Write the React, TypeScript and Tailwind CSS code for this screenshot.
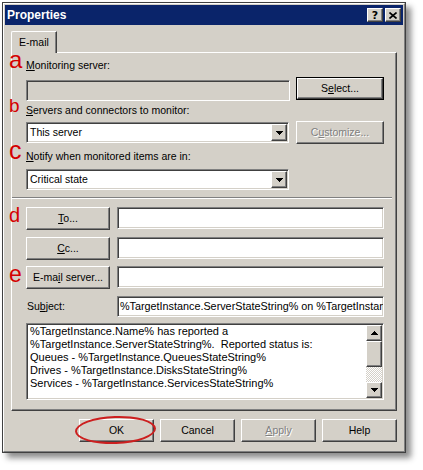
import React from "react";

const sunken =
  "border border-t-[#808080] border-l-[#808080] border-b-white border-r-white shadow-[inset_1px_1px_0_#404040,inset_-1px_-1px_0_#d4d0c8]";
const raised =
  "border border-t-white border-l-white border-b-[#404040] border-r-[#404040] shadow-[inset_-1px_-1px_0_#808080]";

function Tri({ up = false }: { up?: boolean }) {
  return (
    <svg width="7" height="4" viewBox="0 0 7 4" shapeRendering="crispEdges">
      {up ? <path d="M3.5 0L7 4H0z" fill="#000" /> : <path d="M0 0h7L3.5 4z" fill="#000" />}
    </svg>
  );
}

function Btn({
  children,
  className = "",
  disabled = false,
}: {
  children: React.ReactNode;
  className?: string;
  disabled?: boolean;
}) {
  return (
    <div
      className={`${raised} bg-[#d4d0c8] flex items-center justify-center ${
        disabled ? "text-[#808080] [text-shadow:1px_1px_0_#fff]" : "text-black"
      } ${className}`}
    >
      {children}
    </div>
  );
}

function Combo({ text }: { text: string }) {
  return (
    <div className={`${sunken} bg-white h-[21px] w-[263px] flex items-center`}>
      <span className="pl-[3px] flex-1">{text}</span>
      <div className={`${raised} w-[16px] h-[17px] mr-[1px] bg-[#d4d0c8] flex items-center justify-center`}>
        <Tri />
      </div>
    </div>
  );
}

export default function App() {
  return (
    <div className="relative w-[423px] h-[470px] bg-white overflow-hidden pt-[2px] pl-[2px] font-['Liberation_Sans',Arial,sans-serif] text-[10.5px] leading-[13px] text-black">
      {/* window */}
      <div className="w-[404px] h-[451px] border border-[#404040] bg-[#d4d0c8] shadow-[5px_5px_6px_rgba(0,0,0,0.45)]">
        <div className="h-full border border-t-white border-l-white border-b-[#808080] border-r-[#808080] p-px flex flex-col">
          {/* title bar */}
          <div className="h-[20px] bg-[#0a246a] flex items-center pl-[2px] pr-[2px]">
            <span className="text-white font-bold text-[12px] leading-[14px]">Properties</span>
            <div className="ml-auto flex gap-[2px]">
              <div className={`${raised} w-[16px] h-[14px] bg-[#d4d0c8] flex items-center justify-center font-bold text-[11px] leading-none font-['DejaVu_Sans',sans-serif]`}>
                ?
              </div>
              <div className={`${raised} w-[16px] h-[14px] bg-[#d4d0c8] flex items-center justify-center`}>
                <svg width="8" height="7" viewBox="0 0 8 7">
                  <path d="M0.5 0.5L7.5 6.5M7.5 0.5L0.5 6.5" stroke="#000" strokeWidth="1.6" />
                </svg>
              </div>
            </div>
          </div>

          {/* content */}
          <div className="px-[6px] flex flex-col">
            {/* tab */}
            <div className="mt-[6px] relative z-10 -mb-px w-[46px] h-[22px] bg-[#d4d0c8] border-l border-t border-l-white border-t-white border-r border-r-[#404040] rounded-tl-[2px] shadow-[inset_-1px_0_0_#808080] flex items-start justify-center pt-[4px]">
              E-mail
            </div>

            {/* panel */}
            <div className="h-[359px] border border-t-white border-l-white border-r-[#404040] border-b-[#404040] shadow-[inset_-1px_-1px_0_#808080] pt-[6px] pl-[14px] pr-[12px] flex flex-col">
              <div>
                <u>M</u>onitoring server:
              </div>
              <div className="mt-[5px] flex items-start">
                <div className={`${sunken} bg-[#d4d0c8] w-[264px] h-[21px] mt-[3px]`} />
                <div className="ml-auto w-[88px] h-[23px] border border-black">
                  <Btn className="w-full h-full">
                    <span>
                      S<u>e</u>lect...
                    </span>
                  </Btn>
                </div>
              </div>

              <div className="mt-[3px]">
                <u>S</u>ervers and connectors to monitor:
              </div>
              <div className="mt-[4px] flex items-start">
                <div className="mt-[1px]">
                  <Combo text="This server" />
                </div>
                <Btn className="ml-auto w-[88px] h-[23px]" disabled>
                  <span>
                    C<u>u</u>stomize...
                  </span>
                </Btn>
              </div>

              <div className="mt-[6px]">
                <u>N</u>otify when monitored items are in:
              </div>
              <div className="mt-[6px]">
                <Combo text="Critical state" />
              </div>

              <div className="mt-[7px] ml-[-14px] mr-[-8px] h-[2px] border-t border-t-[#808080] border-b border-b-white" />

              <div className="mt-[8px] flex items-start">
                <Btn className="w-[84px] h-[23px]">
                  <span>
                    <u>T</u>o...
                  </span>
                </Btn>
                <div className={`${sunken} bg-white ml-auto w-[267px] h-[22px]`} />
              </div>
              <div className="mt-[7px] flex items-start">
                <Btn className="w-[84px] h-[23px]">
                  <span>
                    <u>C</u>c...
                  </span>
                </Btn>
                <div className={`${sunken} bg-white ml-auto w-[267px] h-[22px]`} />
              </div>
              <div className="mt-[6px] flex items-start">
                <Btn className="w-[84px] h-[23px]">
                  <span>
                    E-ma<u>i</u>l server...
                  </span>
                </Btn>
                <div className={`${sunken} bg-white ml-auto w-[267px] h-[22px]`} />
              </div>

              <div className="mt-[7px] flex items-center">
                <span className="pl-[1px]">
                  Su<u>b</u>ject:
                </span>
                <div className={`${sunken} bg-white ml-auto w-[267px] h-[21px] flex items-center overflow-hidden whitespace-nowrap pl-[2px] text-[10.8px]`}>
                  %TargetInstance.ServerStateString% on %TargetInstan
                </div>
              </div>

              <div className={`${sunken} bg-white mt-[6px] h-[77px] flex`}>
                <div className="flex-1 pl-[3px] pt-[1px] whitespace-pre overflow-hidden text-[11px]">
                  <div>%TargetInstance.Name% has reported a</div>
                  <div>%TargetInstance.ServerStateString%.  Reported status is:</div>
                  <div>Queues - %TargetInstance.QueuesStateString%</div>
                  <div>Drives - %TargetInstance.DisksStateString%</div>
                  <div>Services - %TargetInstance.ServicesStateString%</div>
                </div>
                <div className="w-[16px] my-[1px] mr-[1px] flex flex-col">
                  <div className={`${raised} h-[16px] bg-[#d4d0c8] flex items-center justify-center`}>
                    <Tri up />
                  </div>
                  <div className={`${raised} h-[26px] bg-[#d4d0c8]`} />
                  <div className="flex-1 bg-[repeating-conic-gradient(#ffffff_0_25%,#d4d0c8_0_50%)] bg-[length:2px_2px]" />
                  <div className={`${raised} h-[16px] bg-[#d4d0c8] flex items-center justify-center`}>
                    <Tri />
                  </div>
                </div>
              </div>
            </div>

            {/* bottom buttons */}
            <div className="mt-[8px] flex justify-end gap-[6px]">
              <div className="relative">
                <Btn className="w-[75px] h-[23px]">OK</Btn>
                <div className="absolute -left-[4px] -right-[2px] -top-[3px] -bottom-[2px] rounded-[50%] border-2 border-[#cc1f1f] -rotate-2" />
              </div>
              <Btn className="w-[75px] h-[23px]">Cancel</Btn>
              <Btn className="w-[75px] h-[23px]" disabled>
                <span>
                  <u>A</u>pply
                </span>
              </Btn>
              <Btn className="w-[75px] h-[23px]">Help</Btn>
            </div>
          </div>
        </div>
      </div>

      {/* red annotation letters */}
      <span className="absolute left-[9px] top-[48px] text-[24px] leading-none text-[#d40000]">a</span>
      <span className="absolute left-[9px] top-[96px] text-[19px] leading-none text-[#d40000]">b</span>
      <span className="absolute left-[9px] top-[138px] text-[25px] leading-none text-[#d40000]">c</span>
      <span className="absolute left-[9px] top-[205px] text-[20px] leading-none text-[#d40000]">d</span>
      <span className="absolute left-[9px] top-[263px] text-[23px] leading-none text-[#d40000]">e</span>
    </div>
  );
}
